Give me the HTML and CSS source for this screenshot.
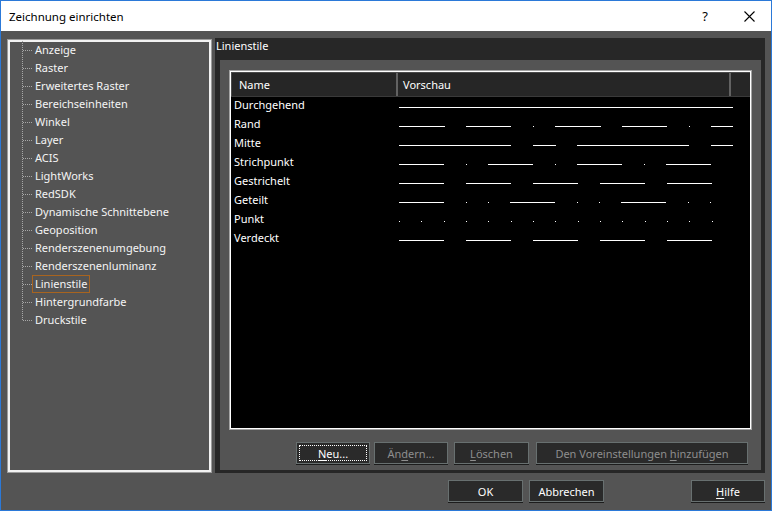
FILE: index.html
```html
<!DOCTYPE html>
<html lang="de">

<head>
  <meta charset="UTF-8" />
  <title>Zeichnung einrichten</title>
  <link rel="stylesheet" href="styles.css">
</head>

<body>
  <div class="window">
    <div class="titlebar">
      <span class="title">Zeichnung einrichten</span>
      <span class="help">?</span>
      <span class="close">
        <svg width="11" height="11" viewBox="0 0 11 11"><path d="M0.5 0.5 L10.5 10.5 M10.5 0.5 L0.5 10.5" stroke="#000" stroke-width="1.1" fill="none" /></svg>
      </span>
    </div>

    <div class="main">
      <!-- Baum links -->
      <div class="tree">
        <ul class="tree-list">
          <li class="tree-item"><span class="branch"></span><span class="label">Anzeige</span></li>
          <li class="tree-item"><span class="branch"></span><span class="label">Raster</span></li>
          <li class="tree-item"><span class="branch"></span><span class="label">Erweitertes Raster</span></li>
          <li class="tree-item"><span class="branch"></span><span class="label">Bereichseinheiten</span></li>
          <li class="tree-item"><span class="branch"></span><span class="label">Winkel</span></li>
          <li class="tree-item"><span class="branch"></span><span class="label">Layer</span></li>
          <li class="tree-item"><span class="branch"></span><span class="label">ACIS</span></li>
          <li class="tree-item"><span class="branch"></span><span class="label">LightWorks</span></li>
          <li class="tree-item"><span class="branch"></span><span class="label">RedSDK</span></li>
          <li class="tree-item"><span class="branch"></span><span class="label">Dynamische Schnittebene</span></li>
          <li class="tree-item"><span class="branch"></span><span class="label">Geoposition</span></li>
          <li class="tree-item"><span class="branch"></span><span class="label">Renderszenenumgebung</span></li>
          <li class="tree-item"><span class="branch"></span><span class="label">Renderszenenluminanz</span></li>
          <li class="tree-item"><span class="branch"></span><span class="label selected">Linienstile</span></li>
          <li class="tree-item"><span class="branch"></span><span class="label">Hintergrundfarbe</span></li>
          <li class="tree-item last"><span class="branch"></span><span class="label">Druckstile</span></li>
        </ul>
      </div>

      <!-- Seite rechts -->
      <div class="page">
        <div class="page-title">Linienstile</div>
        <div class="page-body">
          <div class="listbox">
            <div class="list-head">
              <div class="col-name">Name</div>
              <div class="col-preview">Vorschau</div>
              <div class="col-rest"></div>
            </div>

            <div class="row">
              <span class="name">Durchgehend</span>
              <svg class="preview" width="334" height="19"><line x1="0" y1="10.5" x2="334" y2="10.5" /></svg>
            </div>
            <div class="row">
              <span class="name">Rand</span>
              <svg class="preview" width="334" height="19"><line x1="0" y1="10.5" x2="334" y2="10.5" stroke-dasharray="46 21 45 22 1 21" /></svg>
            </div>
            <div class="row">
              <span class="name">Mitte</span>
              <svg class="preview" width="334" height="19"><line x1="0" y1="10.5" x2="334" y2="10.5" stroke-dasharray="112 22 23 21" /></svg>
            </div>
            <div class="row">
              <span class="name">Strichpunkt</span>
              <svg class="preview" width="334" height="19"><line x1="0" y1="10.5" x2="313" y2="10.5" stroke-dasharray="45 22 1 21" /></svg>
            </div>
            <div class="row">
              <span class="name">Gestrichelt</span>
              <svg class="preview" width="334" height="19"><line x1="0" y1="10.5" x2="313" y2="10.5" stroke-dasharray="45 22" /></svg>
            </div>
            <div class="row">
              <span class="name">Geteilt</span>
              <svg class="preview" width="334" height="19"><line x1="0" y1="10.5" x2="320" y2="10.5" stroke-dasharray="45 22 1 21 1 21" /></svg>
            </div>
            <div class="row">
              <span class="name">Punkt</span>
              <svg class="preview" width="334" height="19"><line x1="0" y1="10.5" x2="320" y2="10.5" stroke-dasharray="1 21.33" /></svg>
            </div>
            <div class="row">
              <span class="name">Verdeckt</span>
              <svg class="preview" width="334" height="19"><line x1="0" y1="10.5" x2="313" y2="10.5" stroke-dasharray="45 22" /></svg>
            </div>
          </div>

          <div class="actions">
            <button class="btn btn-new focused"><u>N</u>eu...</button>
            <button class="btn btn-edit" disabled>Än<u>d</u>ern...</button>
            <button class="btn btn-delete" disabled><u>L</u>öschen</button>
            <button class="btn btn-add" disabled>Den Voreinstellungen <u>h</u>inzufügen</button>
          </div>
        </div>
      </div>
    </div>

    <div class="footer">
      <button class="btn btn-ok">OK</button>
      <button class="btn btn-cancel">Abbrechen</button>
      <button class="btn btn-help"><u>H</u>ilfe</button>
    </div>
  </div>
</body>

</html>
```

FILE: styles.css
```css
* {
  box-sizing: border-box;
}

body {
  margin: 0;
  font-family: "Noto Sans", "Open Sans", sans-serif;
  font-size: 11px;
}

.window {
  width: 772px;
  height: 511px;
  border: 1px solid #2b79d8;
  background-color: #545454;
  display: flex;
  flex-direction: column;
}

/* Titelleiste */
.titlebar {
  height: 30px;
  background-color: #fff;
  display: flex;
  align-items: center;
  color: #000;
  font-size: 11.5px;
}

.title {
  flex: 1;
  padding-left: 8px;
}

.help {
  width: 20px;
  margin-right: 24px;
  text-align: center;
  font-size: 13px;
}

.close {
  width: 20px;
  margin-right: 12px;
  display: flex;
  justify-content: center;
}

.main {
  display: flex;
  align-items: flex-start;
  padding-left: 6px;
  height: 442px;
}

/* Baum */
.tree {
  margin-top: 8px;
  width: 205px;
  height: 434px;
  border: 1px solid #9c9c9c;
  box-shadow: inset 0 0 0 2px #f2f2f2;
  padding-top: 1px;
}

.tree-list {
  list-style: none;
  margin: 0;
  padding: 0;
}

.tree-item {
  display: flex;
  align-items: center;
  height: 18px;
  color: #f4f4f4;
}

.branch {
  width: 10px;
  height: 18px;
  margin-left: 14px;
  background:
    repeating-linear-gradient(90deg, #a8a8a8 0 1px, transparent 1px 2px) right 0 top 9px / 9px 1px no-repeat,
    repeating-linear-gradient(180deg, #a8a8a8 0 1px, transparent 1px 2px) left 0 top 0 / 1px 100% no-repeat;
}

.last .branch {
  background-size: 9px 1px, 1px 10px;
}

.label {
  padding: 0 2px;
  height: 18px;
  line-height: 15px;
  border: 1px solid transparent;
  white-space: nowrap;
}

.label.selected {
  border-color: #a8641f;
}

/* Seite */
.page {
  margin-top: 7px;
  margin-left: 3px;
  width: 550px;
  height: 435px;
  background-color: #272727;
}

.page-title {
  height: 22px;
  padding-left: 1px;
  line-height: 16px;
  color: #fff;
}

.page-body {
  margin: 0 4px 0 5px;
  height: 410px;
  background-color: #545454;
  padding: 10px 0 0 9px;
}

.listbox {
  width: 523px;
  height: 360px;
  border: 1px solid #a3a3a3;
  box-shadow: inset 0 0 0 1px #fff;
  background-color: #000;
  padding: 1px;
  color: #fff;
}

.list-head {
  display: flex;
  height: 25px;
  background-color: #262626;
  border-top: 1px solid #4a4a4a;
  border-bottom: 1px solid #3a3a3a;
}

.list-head div {
  line-height: 23px;
}

.col-name {
  width: 167px;
  padding-left: 7px;
  border-left: 1px solid #4a4a4a;
  border-right: 2px solid #626262;
}

.col-preview {
  width: 333px;
  padding-left: 5px;
  border-right: 2px solid #626262;
}

.col-rest {
  flex: 1;
}

.row {
  display: flex;
  height: 19px;
  align-items: flex-start;
}

.name {
  width: 168px;
  padding-left: 3px;
  line-height: 15px;
}

.preview {
  display: block;
  shape-rendering: crispEdges;
}

.preview line {
  stroke: #fff;
  stroke-width: 1;
}

/* Knoepfe */
.actions {
  display: flex;
  margin-top: 12px;
  padding-left: 67px;
}

.btn {
  height: 22px;
  padding: 0;
  font-family: inherit;
  font-size: 11px;
  color: #fff;
  background-color: #2a2a2a;
  border: 1px solid #687070;
  box-shadow: 0 1px 0 #1c1c1c;
}

.btn:disabled {
  color: #8e8e8e;
}

.btn u {
  text-underline-offset: 2px;
}

.focused {
  outline: 1px dotted #fff;
  outline-offset: -4px;
}

.btn-new {
  width: 74px;
}

.btn-edit {
  width: 74px;
  margin-left: 4px;
}

.btn-delete {
  width: 75px;
  margin-left: 6px;
}

.btn-add {
  width: 212px;
  margin-left: 7px;
}

.footer {
  display: flex;
  justify-content: flex-end;
  padding: 7px 6px 0 0;
}

.btn-ok,
.btn-cancel {
  width: 75px;
}

.btn-cancel {
  margin-left: 6px;
}

.btn-help {
  width: 74px;
  margin-left: 87px;
}
```
